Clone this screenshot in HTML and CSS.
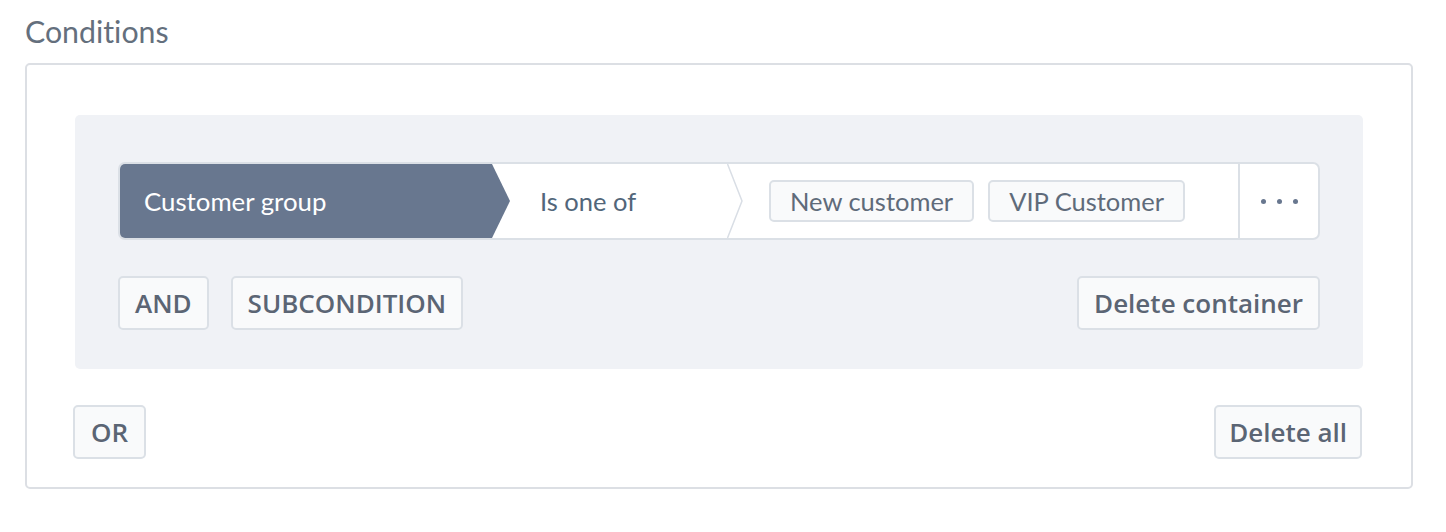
FILE: index.html
```html
<!DOCTYPE html>
<html lang="en">
<head>
<meta charset="utf-8">
<title>Conditions</title>
<link rel="stylesheet" href="styles.css">
</head>
<body>
<div class="page">
  <div class="label">Conditions</div>
  <div class="outer">
    <div class="container">
      <div class="cond-row">
        <div class="seg-field">Customer group</div>
        <div class="seg-op">
          <span class="op-text">Is one of</span>
          <svg class="chev" viewBox="0 0 16 74" preserveAspectRatio="none" aria-hidden="true">
            <polyline points="0.5,0 15,37 0.5,74" fill="none" stroke="#d9dee5" stroke-width="1.5"/>
          </svg>
        </div>
        <div class="seg-values">
          <span class="tag">New customer</span>
          <span class="tag">VIP Customer</span>
        </div>
        <div class="seg-more">
          <span class="dot"></span><span class="dot"></span><span class="dot"></span>
        </div>
      </div>
      <div class="btn-row">
        <div class="btn-group">
          <button class="btn">AND</button>
          <button class="btn">SUBCONDITION</button>
        </div>
        <button class="btn">Delete container</button>
      </div>
    </div>
    <div class="btn-row outer-row">
      <button class="btn btn-or">OR</button>
      <button class="btn btn-del">Delete all</button>
    </div>
  </div>
</div>
</body>
</html>
```
FILE: styles.css
```css
html, body {
  margin: 0;
  padding: 0;
  background: #ffffff;
}

body {
  font-family: "Lato", "Open Sans", sans-serif;
  font-variant-ligatures: none;
  color: #52667a;
}

.page {
  padding: 12px 0 0 25px;
  width: 1388px;
}

.label {
  font-size: 30.3px;
  line-height: 38px;
  color: #646f7d;
  height: 38px;
  margin-bottom: 13px;
}

.outer {
  box-sizing: border-box;
  width: 1388px;
  height: 426px;
  border: 2px solid #dcdfe4;
  border-radius: 5px;
  padding: 50px 48px 0 48px;
}

.container {
  box-sizing: border-box;
  width: 1288px;
  height: 254px;
  background: #f0f2f6;
  border-radius: 5px;
  padding: 47px 43px 0 43px;
}

.cond-row {
  box-sizing: border-box;
  display: flex;
  height: 78px;
  border: 2px solid #dbe0e6;
  border-radius: 7px;
  background: #ffffff;
  overflow: hidden;
}

.seg-field {
  position: relative;
  z-index: 1;
  flex: none;
  width: 390px;
  background: #68778f;
  color: #ffffff;
  font-size: 25.8px;
  display: flex;
  align-items: center;
  padding-left: 24px;
  box-sizing: border-box;
  clip-path: polygon(0 0, calc(100% - 18px) 0, 100% 50%, calc(100% - 18px) 100%, 0 100%);
}

.seg-op {
  flex: none;
  width: 251px;
  margin-left: -18px;
  display: flex;
  align-items: stretch;
}

.op-text {
  flex: 1;
  display: flex;
  align-items: center;
  padding-left: 48px;
  font-size: 25.5px;
  color: #52667a;
}

.chev {
  width: 16px;
  height: 74px;
  display: block;
}

.seg-values {
  flex: 1;
  display: flex;
  align-items: center;
  gap: 14px;
  padding-left: 26px;
}

.tag {
  box-sizing: border-box;
  height: 42px;
  padding: 0 19px;
  display: flex;
  align-items: center;
  border: 2px solid #dbe0e6;
  border-radius: 5px;
  background: #f9fafb;
  font-size: 25.5px;
  color: #5f6b7a;
}

.seg-more {
  flex: none;
  width: 78px;
  border-left: 2px solid #dbe0e6;
  display: flex;
  align-items: center;
  justify-content: center;
  gap: 11px;
}

.dot {
  width: 5px;
  height: 5px;
  border-radius: 50%;
  background: #68778f;
}

.btn-row {
  display: flex;
  justify-content: space-between;
  align-items: center;
  margin-top: 36px;
}

.btn-group {
  display: flex;
  gap: 22px;
}

.btn {
  box-sizing: border-box;
  height: 54px;
  padding: 0 15px;
  border: 2px solid #dbe0e6;
  border-radius: 5px;
  background: #f9fafb;
  font-family: "Open Sans", "Lato", sans-serif;
  font-weight: 600;
  font-size: 26px;
  color: #5b6574;
  cursor: pointer;
}

.btn-or {
  padding: 0 16px;
}

.btn-del {
  padding: 0 13px;
}

.outer-row {
  margin-top: 36px;
  margin-left: -2px;
  margin-right: 1px;
}
```
